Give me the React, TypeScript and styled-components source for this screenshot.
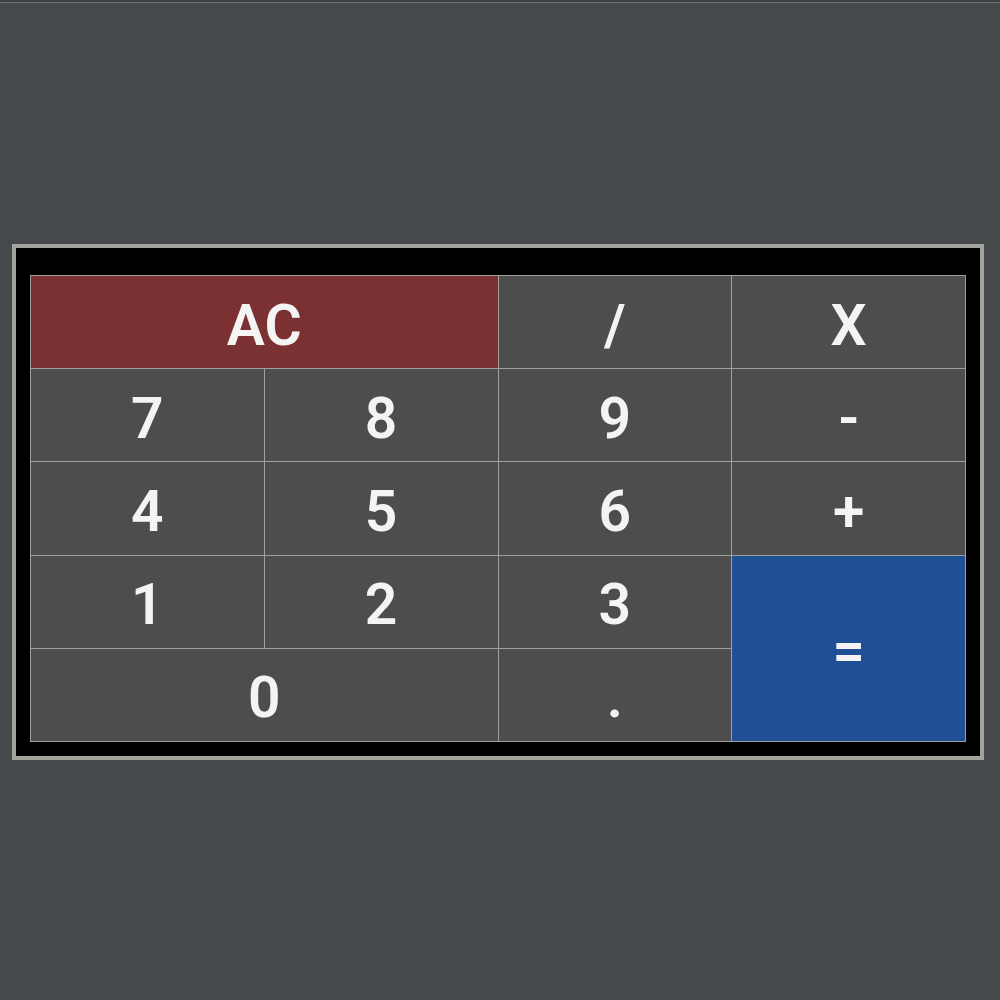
import React from "react";
import styled, { createGlobalStyle } from "styled-components";

const Global = createGlobalStyle`
  html, body { margin: 0; padding: 0; background: #46494c; }
  body { font-family: Roboto, "Liberation Sans", sans-serif; }
`;

const Page = styled.div`
  width: 1000px;
  height: 1000px;
  background: #46494c;
  border-top: 2px solid #3d4043;
  box-sizing: border-box;
  &::before {
    content: "";
    display: block;
    height: 1px;
    background: #6e7174;
  }
`;

const Frame = styled.div`
  margin: 241px 0 0 12px;
  width: fit-content;
  border: 4px solid #a3a39d;
  background: #000;
  padding: 27px 14px 14px 14px;
`;

const Keys = styled.div`
  width: 936px;
  height: 467px;
  box-sizing: border-box;
  display: grid;
  grid-template-columns: repeat(4, 1fr);
  grid-template-rows: repeat(5, 1fr);
  gap: 1px;
  padding: 1px;
  background: #a09f9b;
`;

type KeyProps = { $tone?: "red" | "blue"; $col?: number; $row?: number };

const Key = styled.div<KeyProps>`
  grid-column: span ${(p) => p.$col ?? 1};
  grid-row: span ${(p) => p.$row ?? 1};
  background: ${(p) =>
    p.$tone === "red" ? "#7b3131" : p.$tone === "blue" ? "#1f4f94" : "#4d4d4d"};
  color: #f4f4f4;
  font-family: Roboto, "Liberation Sans", sans-serif;
  font-weight: 600;
  font-size: 57px;
  line-height: 1;
  display: flex;
  align-items: center;
  justify-content: center;
  padding-top: 6px;
  box-sizing: border-box;
`;

const keys: { label: string; tone?: "red" | "blue"; col?: number; row?: number }[] = [
  { label: "AC", tone: "red", col: 2 },
  { label: "/" },
  { label: "X" },
  { label: "7" },
  { label: "8" },
  { label: "9" },
  { label: "-" },
  { label: "4" },
  { label: "5" },
  { label: "6" },
  { label: "+" },
  { label: "1" },
  { label: "2" },
  { label: "3" },
  { label: "=", tone: "blue", row: 2 },
  { label: "0", col: 2 },
  { label: "." },
];

export default function App() {
  return (
    <Page>
      <Global />
      <Frame>
        <Keys>
          {keys.map((k, i) => (
            <Key key={i} $tone={k.tone} $col={k.col} $row={k.row}>
              {k.label}
            </Key>
          ))}
        </Keys>
      </Frame>
    </Page>
  );
}
